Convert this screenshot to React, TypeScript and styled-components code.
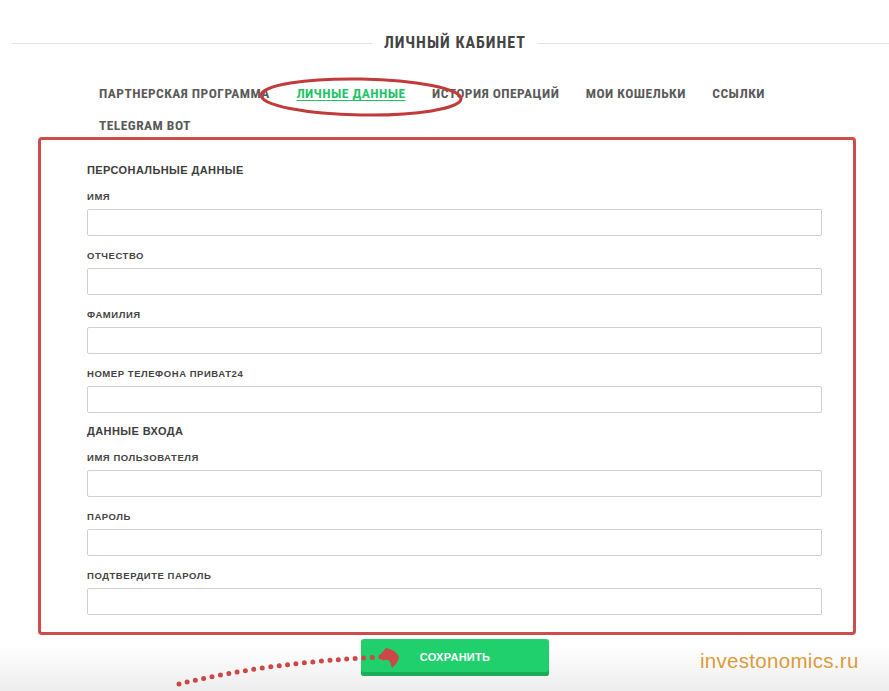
import React from 'react'
import styled, { createGlobalStyle } from 'styled-components'

const GlobalStyle = createGlobalStyle`
  html, body {
    margin: 0;
    padding: 0;
    background: #ffffff;
    overflow: hidden;
  }
  * {
    box-sizing: border-box;
  }
`;

const Page = styled.div`
  position: relative;
  width: 889px;
  height: 691px;
  font-family: "Liberation Sans", Arial, sans-serif;
  color: #444;
`;

const Header = styled.div`
  display: flex;
  align-items: center;
  margin-left: 12px;
  width: 886px;
  padding-top: 34px;
  height: 52px;

  &::before,
  &::after {
    content: "";
    flex: 1;
    height: 1px;
    background: #e2e2e2;
  }
`;

const Title = styled.h1`
  margin: 0;
  padding: 0 12px;
  font-family: "Liberation Sans Narrow", "Roboto Condensed", "Liberation Sans", sans-serif;
  font-stretch: condensed;
  font-size: 16px;
  letter-spacing: 1px;
  font-weight: 700;
  color: #444;
  line-height: 18px;
`;

const Tabs = styled.nav`
  display: flex;
  flex-wrap: wrap;
  column-gap: 26.5px;
  row-gap: 8px;
  padding: 29px 110px 0 99px;
`;

const Tab = styled.a<{ $active?: boolean }>`
  font-family: "Liberation Sans Narrow", "Roboto Condensed", "Liberation Sans", sans-serif;
  font-stretch: condensed;
  font-size: 13.5px;
  letter-spacing: 0.45px;
  font-weight: 700;
  line-height: 24px;
  color: ${p => (p.$active ? '#1fc468' : '#5a5a5a')};
  text-decoration: ${p => (p.$active ? 'underline' : 'none')};
  text-underline-offset: 2px;
  white-space: nowrap;
`;

const FormBox = styled.div`
  margin: 0 0 0 38px;
  width: 818px;
  border: 3px solid #cf4c4c;
  border-radius: 4px;
  padding: 23px 31px 17px 46px;
  display: flex;
  flex-direction: column;
`;

const SectionTitle = styled.h2<{ $top?: number }>`
  margin: ${p => p.$top ?? 0}px 0 0 0;
  font-size: 11px;
  line-height: 14px;
  font-weight: 700;
  letter-spacing: 0.4px;
  color: #3d3d3d;
`;

const Field = styled.label`
  display: flex;
  flex-direction: column;
  margin-top: 14px;
`;

const Label = styled.span`
  font-size: 9.5px;
  line-height: 12px;
  font-weight: 700;
  letter-spacing: 0.55px;
  color: #444;
  margin-bottom: 6px;
`;

const Input = styled.input`
  height: 27px;
  width: 100%;
  border: 1px solid #cfcfcf;
  border-radius: 2px;
  background: #fff;
  padding: 0 8px;
  font-family: inherit;
  font-size: 12px;
  outline: none;
`;

const Footer = styled.div`
  display: flex;
  align-items: flex-start;
  height: 58px;
  padding-top: 4px;
  background: linear-gradient(to bottom, #ffffff 0%, #ffffff 20%, #ececec 100%);
`;

const SaveButton = styled.button`
  margin-left: 361px;
  width: 188px;
  height: 37px;
  border: none;
  border-radius: 3px;
  background: #1fd06c;
  box-shadow: inset 0 -4px 0 #19ad59;
  color: #fff;
  font-family: "Liberation Sans", Arial, sans-serif;
  font-size: 11px;
  font-weight: 700;
  letter-spacing: 0.3px;
  padding-bottom: 3px;
  cursor: pointer;
`;

const Watermark = styled.div`
  margin-left: 151px;
  margin-top: 10px;
  font-family: "Liberation Sans", Arial, sans-serif;
  font-size: 20.5px;
  letter-spacing: 0.3px;
  color: #dc9b3c;
`;

const Overlay = styled.svg`
  position: absolute;
  left: 0;
  top: 0;
  pointer-events: none;
`;

const fields1 = ['ИМЯ', 'ОТЧЕСТВО', 'ФАМИЛИЯ', 'НОМЕР ТЕЛЕФОНА ПРИВАТ24'];
const fields2 = ['ИМЯ ПОЛЬЗОВАТЕЛЯ', 'ПАРОЛЬ', 'ПОДТВЕРДИТЕ ПАРОЛЬ'];

const tabs = [
  'ПАРТНЕРСКАЯ ПРОГРАММА',
  'ЛИЧНЫЕ ДАННЫЕ',
  'ИСТОРИЯ ОПЕРАЦИЙ',
  'МОИ КОШЕЛЬКИ',
  'ССЫЛКИ',
  'TELEGRAM BOT',
];

export default function App() {
  return (
    <Page>
      <GlobalStyle />
      <Header>
        <Title>ЛИЧНЫЙ КАБИНЕТ</Title>
      </Header>
      <Tabs>
        {tabs.map(t => (
          <Tab key={t} $active={t === 'ЛИЧНЫЕ ДАННЫЕ'}>{t}</Tab>
        ))}
      </Tabs>
      <FormBox>
        <SectionTitle>ПЕРСОНАЛЬНЫЕ ДАННЫЕ</SectionTitle>
        {fields1.map(f => (
          <Field key={f}>
            <Label>{f}</Label>
            <Input type="text" />
          </Field>
        ))}
        <SectionTitle $top={11}>ДАННЫЕ ВХОДА</SectionTitle>
        {fields2.map(f => (
          <Field key={f}>
            <Label>{f}</Label>
            <Input type={f.includes('ПАРОЛЬ') ? 'password' : 'text'} />
          </Field>
        ))}
      </FormBox>
      <Footer>
        <SaveButton>СОХРАНИТЬ</SaveButton>
        <Watermark>investonomics.ru</Watermark>
      </Footer>

      {/* annotations drawn over the page */}
      <Overlay width="889" height="691" viewBox="0 0 889 691">
        <ellipse cx="361" cy="97" rx="100" ry="18" fill="none" stroke="#c23b3b" strokeWidth="3" transform="rotate(1 361 97)" />
        <path
          d="M179 684 Q 270 662 382 657"
          fill="none"
          stroke="#cc4747"
          strokeWidth="5"
          strokeLinecap="round"
          strokeDasharray="0 8.5"
        />
        <path
          d="M380 655 L386 648 Q 396 650 399 657 Q 398 663 392 668 L390 662 Q 388 658 383 661 Z"
          fill="#cc4747"
        />
      </Overlay>
    </Page>
  )
}
